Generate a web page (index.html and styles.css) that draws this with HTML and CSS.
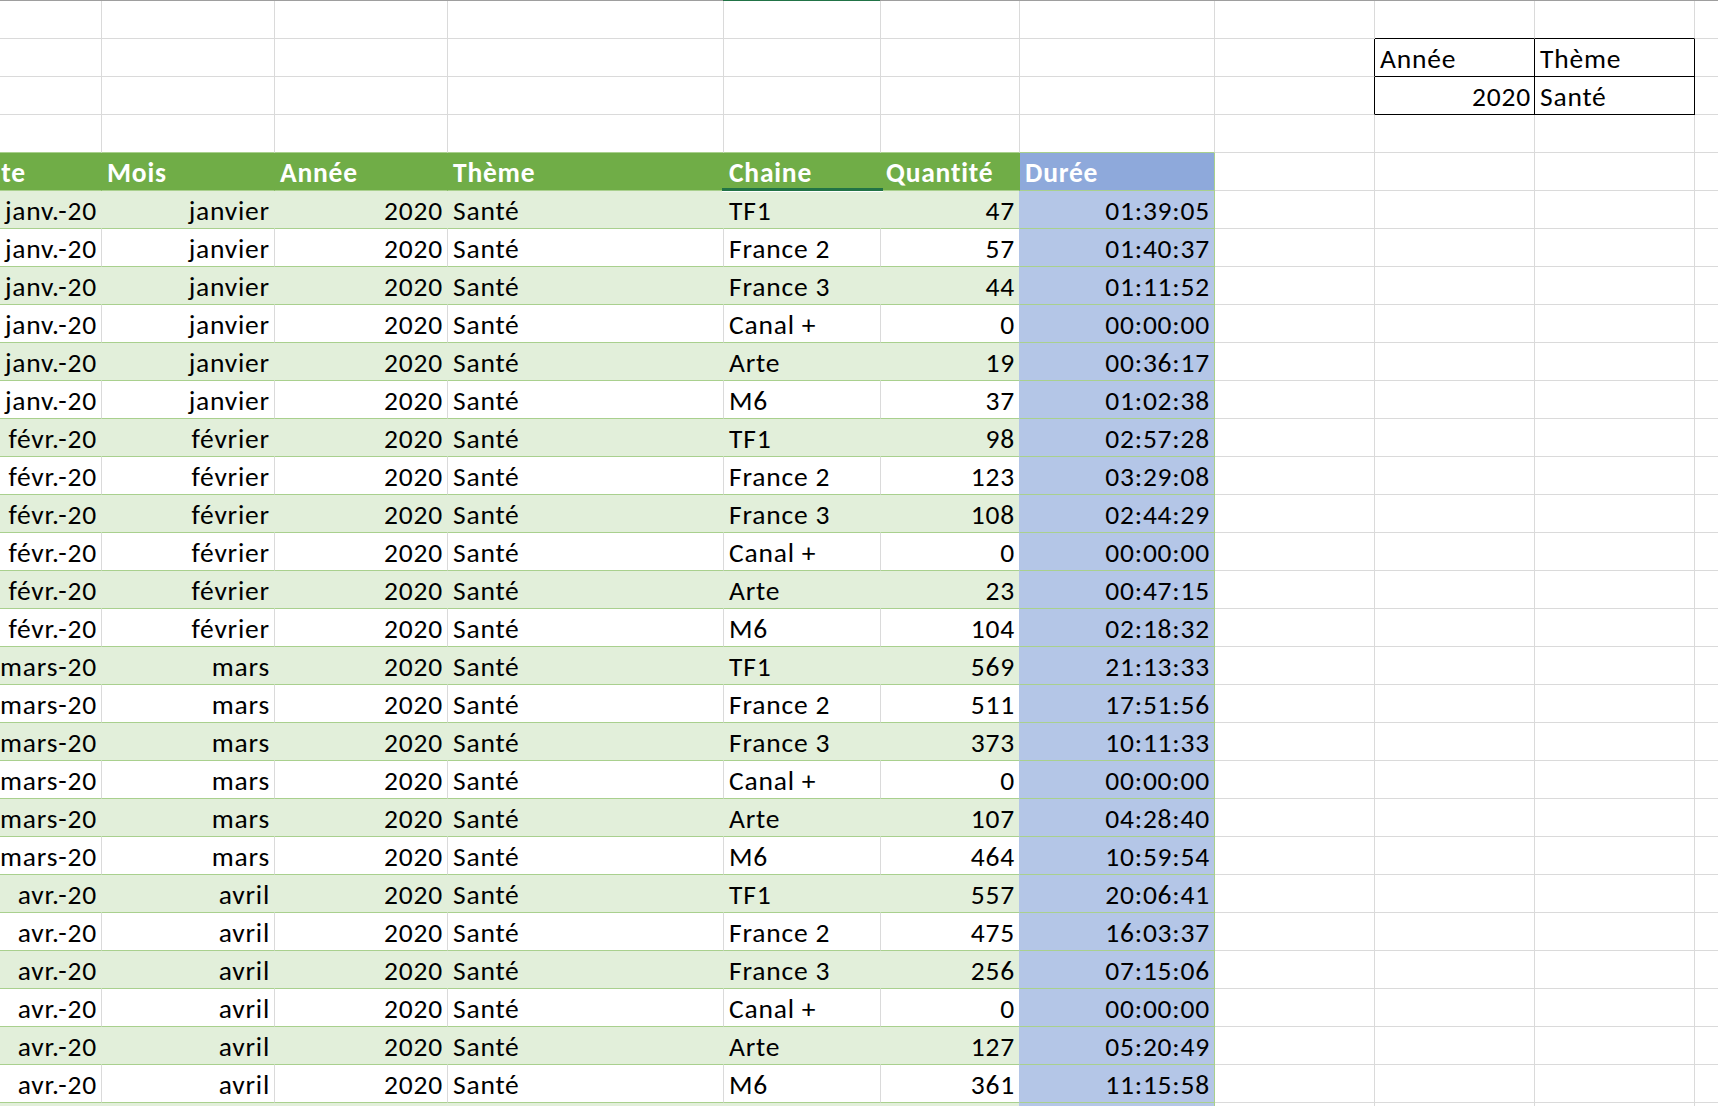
FILE: index.html
```html
<!DOCTYPE html>
<html lang="fr">
<head>
<meta charset="utf-8">
<title>Feuille</title>
<link rel="stylesheet" href="styles.css">
</head>
<body>
<div class="sheet">
  <div class="topbar"><span class="topsel"></span></div>
  <div class="grid">
    <div class="row r1"><div></div><div></div><div></div><div></div><div></div><div></div><div></div><div></div><div></div><div></div><div></div></div>
    <div class="row mini"><div></div><div></div><div></div><div></div><div></div><div></div><div></div><div></div><div>Année</div><div>Thème</div><div></div></div>
    <div class="row mini"><div></div><div></div><div></div><div></div><div></div><div></div><div></div><div></div><div class="num">2020</div><div>Santé</div><div></div></div>
    <div class="row pre"><div></div><div></div><div></div><div></div><div></div><div></div><div></div><div></div><div></div><div></div><div></div></div>
    <div class="row head"><div>Date</div><div>Mois</div><div>Année</div><div>Thème</div><div class="active">Chaine</div><div>Quantité</div><div>Durée</div><div></div><div></div><div></div><div></div></div>

    <div class="row data g"><div>janv.-20</div><div>janvier</div><div>2020</div><div>Santé</div><div>TF1</div><div>47</div><div>01:39:05</div><div></div><div></div><div></div><div></div></div>
    <div class="row data"><div>janv.-20</div><div>janvier</div><div>2020</div><div>Santé</div><div>France 2</div><div>57</div><div>01:40:37</div><div></div><div></div><div></div><div></div></div>
    <div class="row data g"><div>janv.-20</div><div>janvier</div><div>2020</div><div>Santé</div><div>France 3</div><div>44</div><div>01:11:52</div><div></div><div></div><div></div><div></div></div>
    <div class="row data"><div>janv.-20</div><div>janvier</div><div>2020</div><div>Santé</div><div>Canal +</div><div>0</div><div>00:00:00</div><div></div><div></div><div></div><div></div></div>
    <div class="row data g"><div>janv.-20</div><div>janvier</div><div>2020</div><div>Santé</div><div>Arte</div><div>19</div><div>00:36:17</div><div></div><div></div><div></div><div></div></div>
    <div class="row data"><div>janv.-20</div><div>janvier</div><div>2020</div><div>Santé</div><div>M6</div><div>37</div><div>01:02:38</div><div></div><div></div><div></div><div></div></div>

    <div class="row data g"><div>févr.-20</div><div>février</div><div>2020</div><div>Santé</div><div>TF1</div><div>98</div><div>02:57:28</div><div></div><div></div><div></div><div></div></div>
    <div class="row data"><div>févr.-20</div><div>février</div><div>2020</div><div>Santé</div><div>France 2</div><div>123</div><div>03:29:08</div><div></div><div></div><div></div><div></div></div>
    <div class="row data g"><div>févr.-20</div><div>février</div><div>2020</div><div>Santé</div><div>France 3</div><div>108</div><div>02:44:29</div><div></div><div></div><div></div><div></div></div>
    <div class="row data"><div>févr.-20</div><div>février</div><div>2020</div><div>Santé</div><div>Canal +</div><div>0</div><div>00:00:00</div><div></div><div></div><div></div><div></div></div>
    <div class="row data g"><div>févr.-20</div><div>février</div><div>2020</div><div>Santé</div><div>Arte</div><div>23</div><div>00:47:15</div><div></div><div></div><div></div><div></div></div>
    <div class="row data"><div>févr.-20</div><div>février</div><div>2020</div><div>Santé</div><div>M6</div><div>104</div><div>02:18:32</div><div></div><div></div><div></div><div></div></div>

    <div class="row data g"><div>mars-20</div><div>mars</div><div>2020</div><div>Santé</div><div>TF1</div><div>569</div><div>21:13:33</div><div></div><div></div><div></div><div></div></div>
    <div class="row data"><div>mars-20</div><div>mars</div><div>2020</div><div>Santé</div><div>France 2</div><div>511</div><div>17:51:56</div><div></div><div></div><div></div><div></div></div>
    <div class="row data g"><div>mars-20</div><div>mars</div><div>2020</div><div>Santé</div><div>France 3</div><div>373</div><div>10:11:33</div><div></div><div></div><div></div><div></div></div>
    <div class="row data"><div>mars-20</div><div>mars</div><div>2020</div><div>Santé</div><div>Canal +</div><div>0</div><div>00:00:00</div><div></div><div></div><div></div><div></div></div>
    <div class="row data g"><div>mars-20</div><div>mars</div><div>2020</div><div>Santé</div><div>Arte</div><div>107</div><div>04:28:40</div><div></div><div></div><div></div><div></div></div>
    <div class="row data"><div>mars-20</div><div>mars</div><div>2020</div><div>Santé</div><div>M6</div><div>464</div><div>10:59:54</div><div></div><div></div><div></div><div></div></div>

    <div class="row data g"><div>avr.-20</div><div>avril</div><div>2020</div><div>Santé</div><div>TF1</div><div>557</div><div>20:06:41</div><div></div><div></div><div></div><div></div></div>
    <div class="row data"><div>avr.-20</div><div>avril</div><div>2020</div><div>Santé</div><div>France 2</div><div>475</div><div>16:03:37</div><div></div><div></div><div></div><div></div></div>
    <div class="row data g"><div>avr.-20</div><div>avril</div><div>2020</div><div>Santé</div><div>France 3</div><div>256</div><div>07:15:06</div><div></div><div></div><div></div><div></div></div>
    <div class="row data"><div>avr.-20</div><div>avril</div><div>2020</div><div>Santé</div><div>Canal +</div><div>0</div><div>00:00:00</div><div></div><div></div><div></div><div></div></div>
    <div class="row data g"><div>avr.-20</div><div>avril</div><div>2020</div><div>Santé</div><div>Arte</div><div>127</div><div>05:20:49</div><div></div><div></div><div></div><div></div></div>
    <div class="row data"><div>avr.-20</div><div>avril</div><div>2020</div><div>Santé</div><div>M6</div><div>361</div><div>11:15:58</div><div></div><div></div><div></div><div></div></div>

    <div class="row data g"><div></div><div></div><div></div><div></div><div></div><div></div><div></div><div></div><div></div><div></div><div></div></div>
  </div>
</div>
</body>
</html>
```

FILE: styles.css
```css
* {
  box-sizing: border-box;
}

html, body {
  margin: 0;
  padding: 0;
  background: #ffffff;
}

body {
  font-family: Carlito, Calibri, Lato, sans-serif;
  font-size: 27.5px;
  letter-spacing: 0.8px;
  color: #000000;
  overflow: hidden;
}

.sheet {
  width: 1718px;
  height: 1106px;
  overflow: hidden;
}

.topbar {
  display: flex;
  height: 1px;
  background: #9e9e9e;
}

.topsel {
  margin-left: 723px;
  width: 157px;
  background: #217346;
}

.grid {
  margin-left: -36px;
}

.row {
  display: grid;
  grid-template-columns: 138px 173px 173px 276px 157px 139px 195px 160px 160px 160px 160px;
  height: 38px;
}

.row > div {
  height: 38px;
  border-right: 1px solid #dadada;
  border-bottom: 1px solid #dadada;
  padding: 2px 4px 0 5px;
  line-height: 35px;
  white-space: nowrap;
  overflow: hidden;
}

/* small criteria table */
.r1 > :nth-child(9),
.r1 > :nth-child(10) {
  border-bottom-color: #000000;
}

.mini > :nth-child(8) {
  border-right-color: #000000;
}

.mini > :nth-child(9),
.mini > :nth-child(10) {
  border-right-color: #000000;
  border-bottom-color: #000000;
}

.mini > .num {
  text-align: right;
  padding-right: 3px;
}

/* table top border */
.pre > :nth-child(-n+7) {
  border-bottom-color: #a9d08e;
}

/* header */
.head > :nth-child(-n+6) {
  background: #70ad47;
  border-right-color: #70ad47;
  border-bottom-color: #a9d08e;
  color: #ffffff;
  font-weight: bold;
}

.head > :nth-child(7) {
  background: #8ea9db;
  border-right-color: #a9d08e;
  border-bottom-color: #a9d08e;
  color: #ffffff;
  font-weight: bold;
}

.head > .active {
  position: relative;
  overflow: visible;
}

.head > .active::after {
  content: "";
  position: absolute;
  left: -2px;
  right: -3px;
  bottom: -2px;
  height: 3px;
  background: #217346;
  border-bottom: 1px solid #ffffff;
}

/* data rows */
.data > :nth-child(-n+6) {
  border-bottom-color: #a9d08e;
}

.data > :nth-child(6) {
  border-right-color: #b4c6e7;
}

.data > :nth-child(7) {
  background: #b4c6e7;
  border-right-color: #a9d08e;
  border-bottom-color: #a9d08e;
}

.data > :nth-child(1),
.data > :nth-child(2),
.data > :nth-child(3),
.data > :nth-child(6),
.data > :nth-child(7) {
  text-align: right;
}

.data.g > :nth-child(-n+6) {
  background: #e2efda;
  border-right-color: #e2efda;
}

.data.g > :nth-child(6) {
  border-right-color: #b4c6e7;
}
```
